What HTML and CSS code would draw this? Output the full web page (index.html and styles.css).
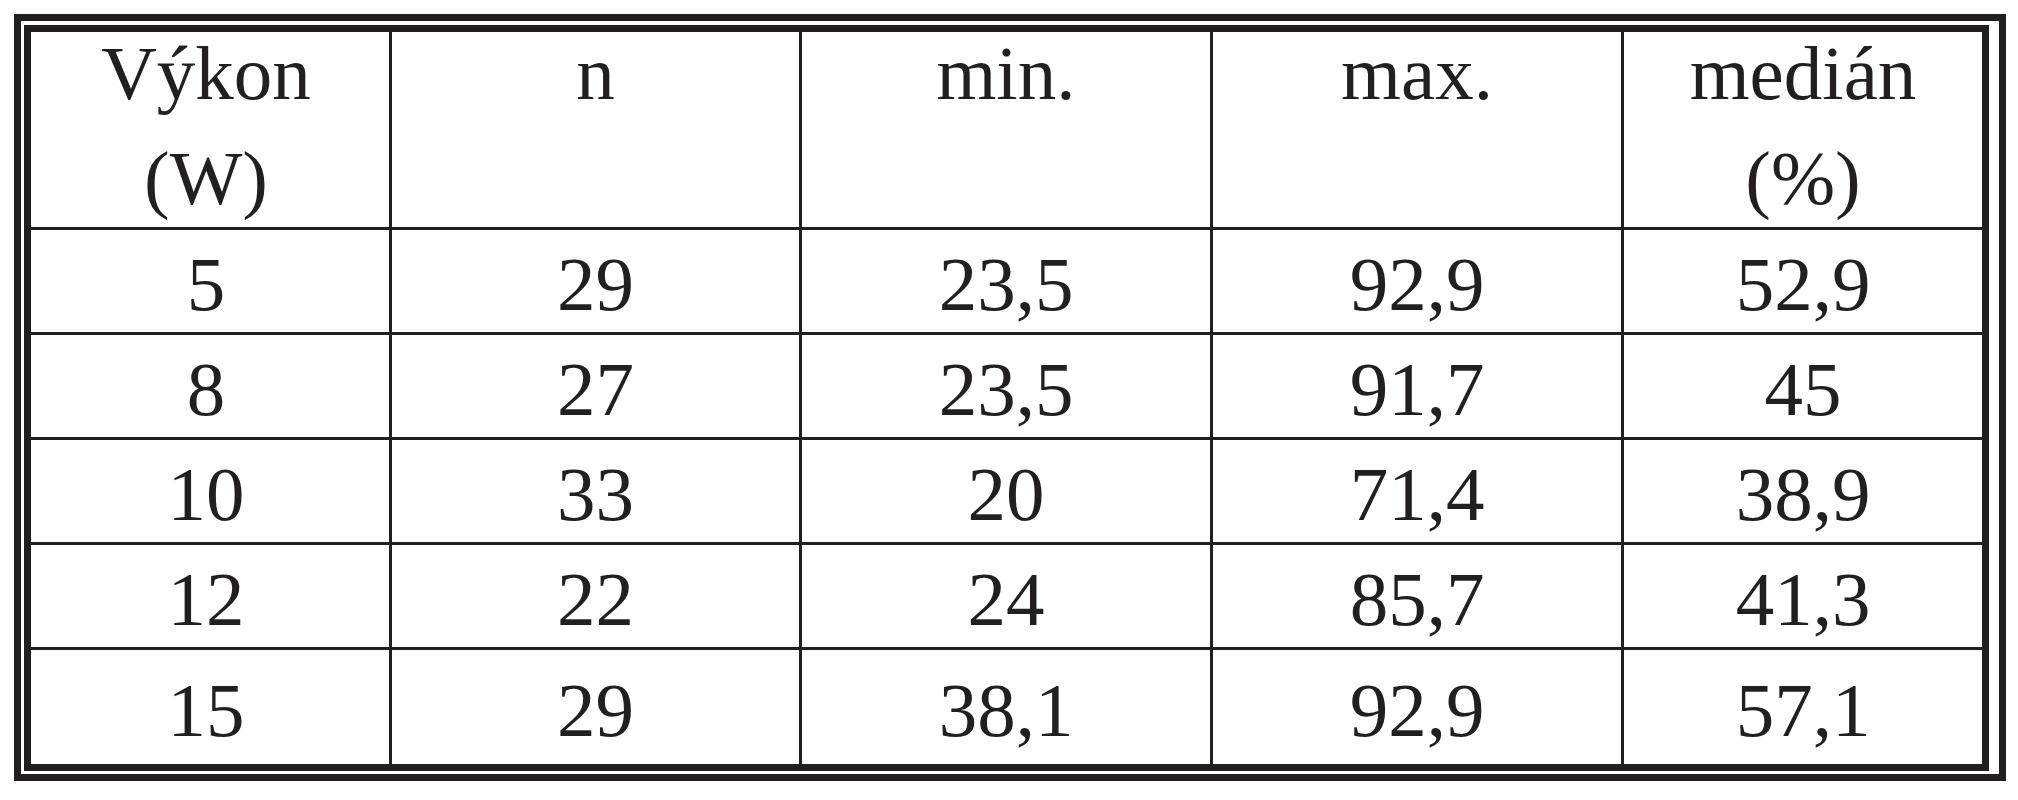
FILE: index.html
```html
<!DOCTYPE html>
<html lang="cs">
<head>
<meta charset="utf-8">
<title>Výkon</title>
<link rel="stylesheet" href="styles.css">
</head>
<body>
<div class="page">
  <div class="frame">
    <table class="data">
      <colgroup>
        <col class="c1"><col class="c2"><col class="c3"><col class="c4"><col class="c5">
      </colgroup>
      <thead>
        <tr class="head">
          <th class="first"><span class="l1">Výkon</span><span class="l2">(W)</span></th>
          <th><span class="l1">n</span></th>
          <th><span class="l1">min.</span></th>
          <th><span class="l1">max.</span></th>
          <th class="last"><span class="l1">medián</span><span class="l2">(%)</span></th>
        </tr>
      </thead>
      <tbody>
        <tr class="r"><td class="first">5</td><td>29</td><td>23,5</td><td>92,9</td><td class="last">52,9</td></tr>
        <tr class="r"><td class="first">8</td><td>27</td><td>23,5</td><td>91,7</td><td class="last">45</td></tr>
        <tr class="r"><td class="first">10</td><td>33</td><td>20</td><td>71,4</td><td class="last">38,9</td></tr>
        <tr class="r"><td class="first">12</td><td>22</td><td>24</td><td>85,7</td><td class="last">41,3</td></tr>
        <tr class="r end"><td class="first">15</td><td>29</td><td>38,1</td><td>92,9</td><td class="last">57,1</td></tr>
      </tbody>
    </table>
  </div>
</div>
</body>
</html>
```

FILE: styles.css
```css
html, body {
  margin: 0;
  padding: 0;
  background: #ffffff;
}

.page {
  padding: 14px 0 0 14px;
}

.frame {
  width: 1972px;
  border: 7px solid #231f20;
  padding: 4px 3px 3px 3px;
  box-sizing: content-box;
  background: #ffffff;
}

.data {
  border: 7px solid #231f20;
  border-collapse: separate;
  border-spacing: 0;
  table-layout: fixed;
  width: 1965px;
  font-family: "Liberation Serif", "Times New Roman", serif;
  font-size: 77px;
  color: #231f20;
}

.c1 { width: 361px; }
.c2 { width: 410px; }
.c3 { width: 411px; }
.c4 { width: 411px; }
.c5 { width: 358px; }

.data th,
.data td {
  padding: 0;
  text-align: center;
  border-right: 3px solid #231f20;
  border-bottom: 3px solid #231f20;
  font-weight: normal;
}

.data th.last,
.data td.last {
  border-right: none;
}

.data tr.end td {
  border-bottom: none;
}

.data .first {
  padding-right: 8px;
}

.head th {
  height: 195px;
  vertical-align: top;
}

.l1,
.l2 {
  display: block;
  line-height: 82px;
}

.l2 {
  margin-top: 23px;
}

.r td {
  height: 105px;
  padding-top: 6px;
  box-sizing: border-box;
  vertical-align: middle;
  line-height: 88px;
}

.r.end td {
  height: 114px;
}
```
